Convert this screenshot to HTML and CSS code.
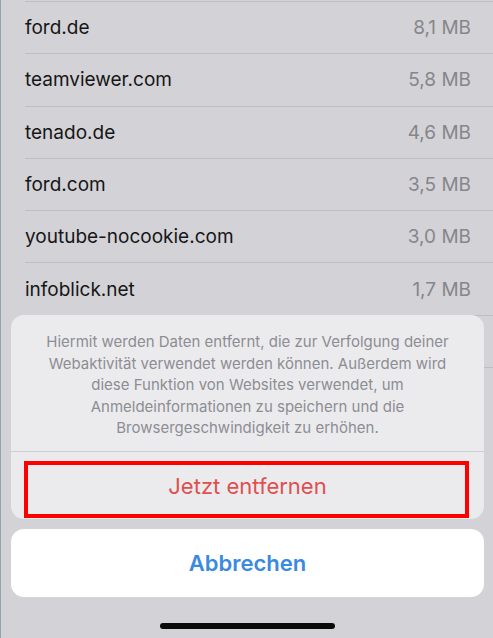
FILE: index.html
```html
<!DOCTYPE html>
<html>
<head>
    <title>Websitedaten</title>
    <meta name="viewport" content="width=device-width, initial-scale=1.0">
    <link rel="stylesheet" href="styles.css">
</head>
<body>
    <div class="screen">
        <ul class="site-list">
            <li class="site-row"><span class="site-name">ford.de</span><span class="site-size">8,1 MB</span></li>
            <li class="site-row"><span class="site-name">teamviewer.com</span><span class="site-size">5,8 MB</span></li>
            <li class="site-row"><span class="site-name">tenado.de</span><span class="site-size">4,6 MB</span></li>
            <li class="site-row"><span class="site-name">ford.com</span><span class="site-size">3,5 MB</span></li>
            <li class="site-row"><span class="site-name">youtube-nocookie.com</span><span class="site-size">3,0 MB</span></li>
            <li class="site-row"><span class="site-name">infoblick.net</span><span class="site-size">1,7 MB</span></li>
            <li class="site-row"><span class="site-name">&nbsp;</span><span class="site-size"></span></li>
            <li class="site-row"><span class="site-name">&nbsp;</span><span class="site-size"></span></li>
        </ul>

        <!-- Action sheet -->
        <div class="action-sheet">
            <div class="sheet-group">
                <p class="sheet-message">Hiermit werden Daten entfernt, die zur Verfolgung deiner Webaktivität verwendet werden können. Außerdem wird diese Funktion von Websites verwendet, um Anmeldeinformationen zu speichern und die Browsergeschwindigkeit zu erhöhen.</p>
                <button class="sheet-btn destructive">Jetzt entfernen</button>
            </div>
            <button class="sheet-btn cancel">Abbrechen</button>
        </div>

        <div class="highlight-box"></div>
        <div class="home-indicator"></div>
    </div>
</body>
</html>
```

FILE: styles.css
```css
body {
    margin: 0;
    padding: 0;
    font-family: Inter, "Noto Sans", sans-serif;
    background-color: #d3d2d7;
}
.screen {
    position: relative;
    width: 493px;
    height: 638px;
    overflow: hidden;
    border-left: 1px solid #97a3b1;
    box-sizing: border-box;
    background-color: #d3d2d7;
}
.site-list {
    list-style: none;
    margin: 0;
    padding: 1px 0 0 24px;
}
.site-row {
    display: flex;
    justify-content: space-between;
    align-items: center;
    height: 51.3px;
    border-top: 1px solid #bebdc2;
    padding-right: 22px;
    font-size: 19px;
}
.site-name {
    color: #161616;
}
.site-size {
    color: #86868a;
}
.action-sheet {
    position: absolute;
    left: 10px;
    right: 9px;
    top: 315px;
    display: flex;
    flex-direction: column;
    gap: 10px;
}
.sheet-group {
    background-color: #ebebee;
    border-radius: 13px;
    overflow: hidden;
}
.sheet-message {
    margin: 0;
    height: 107px;
    padding: 16px 26px 13px;
    font-size: 15px;
    line-height: 21.5px;
    color: #8d8d92;
    text-align: center;
    border-bottom: 1px solid #cfcfd3;
}
.sheet-btn {
    display: block;
    width: 100%;
    border: none;
    background: none;
    font-family: Inter, "Noto Sans", sans-serif;
    font-size: 22px;
    cursor: pointer;
}
.destructive {
    height: 67px;
    color: #df4f4f;
}
.cancel {
    height: 68px;
    background-color: #ffffff;
    border-radius: 13px;
    font-weight: 600;
    color: #3a8ae0;
}
.highlight-box {
    position: absolute;
    left: 23px;
    top: 461px;
    width: 445px;
    height: 57px;
    border: 4px solid #ff0000;
    box-sizing: border-box;
}
.home-indicator {
    position: absolute;
    left: 159px;
    top: 623px;
    width: 175px;
    height: 6px;
    border-radius: 3px;
    background-color: #0a0a0a;
}
```
